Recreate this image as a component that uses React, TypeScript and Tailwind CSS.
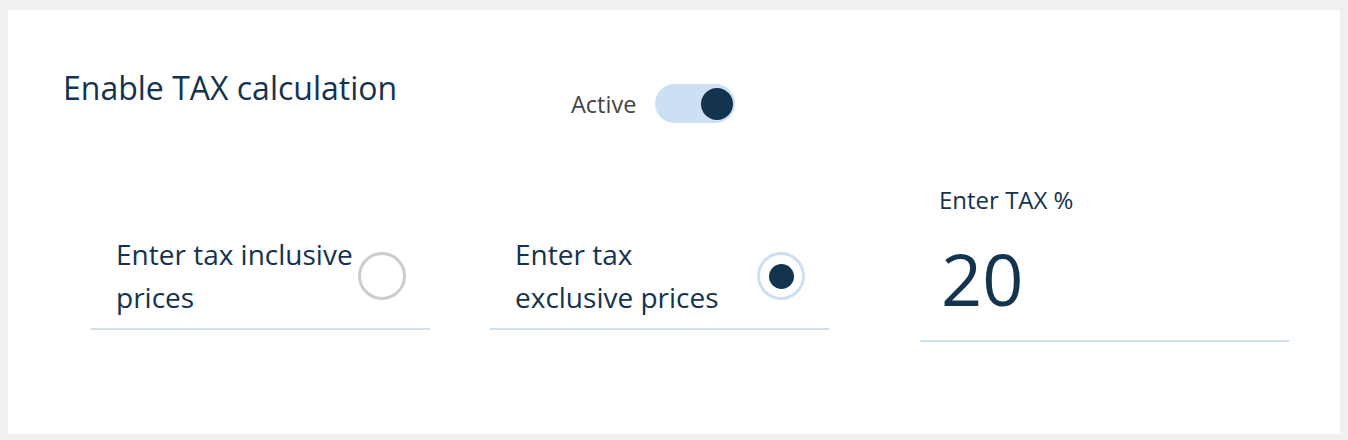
import React from "react";

function Radio({ checked }: { checked: boolean }) {
  if (checked) {
    return (
      <div className="w-[48px] h-[48px] shrink-0 rounded-full border-[3px] border-[#cde0f2] flex items-center justify-center">
        <div className="w-[25px] h-[25px] rounded-full bg-[#14334f]" />
      </div>
    );
  }
  return <div className="w-[48px] h-[48px] shrink-0 rounded-full border-[3px] border-[#cccccc]" />;
}

function Option({ lines, checked }: { lines: string[]; checked: boolean }) {
  return (
    <div className="w-[339px] mt-[49px] border-b-2 border-[#cde0f0] pl-[25px] pr-[24px] pb-[9px] flex items-center justify-between">
      <div className="text-[28px] leading-[43px] text-[#14334f] whitespace-nowrap">
        {lines.map((l, i) => (
          <div key={i}>{l}</div>
        ))}
      </div>
      <Radio checked={checked} />
    </div>
  );
}

export default function App() {
  return (
    <div
      className="w-[1348px] h-[440px] bg-[#f0f0f0] pt-[10px] pl-[8px]"
      style={{ fontFamily: '"Open Sans", sans-serif' }}
    >
      <div className="w-[1332px] h-[424px] bg-white">
        <div className="flex items-start pt-[58px] pl-[55px]">
          <div className="text-[32px] leading-[40px] text-[#14334f] w-[508px]">Enable TAX calculation</div>
          <div className="flex items-center mt-[16px]">
            <span className="text-[23.5px] leading-[32px] text-[#444444] mr-[19px]">Active</span>
            <div className="w-[80px] h-[39px] rounded-full bg-[#cde0f3] flex items-center justify-end pr-[2px]">
              <div className="w-[32px] h-[32px] rounded-full bg-[#14334f]" />
            </div>
          </div>
        </div>
        <div className="flex items-start pl-[83px] mt-[61px]">
          <Option lines={["Enter tax inclusive", "prices"]} checked={false} />
          <div className="w-[60px]" />
          <Option lines={["Enter tax", "exclusive prices"]} checked={true} />
          <div className="w-[91px]" />
          <div className="w-[369px] border-b-2 border-[#cde0f0] pb-[22px]">
            <div className="pl-[19px] text-[24px] leading-[32px] text-[#14334f]">Enter TAX %</div>
            <div className="pl-[21px] mt-[22px] text-[72px] leading-[80px] text-[#14334f]">20</div>
          </div>
        </div>
      </div>
    </div>
  );
}
